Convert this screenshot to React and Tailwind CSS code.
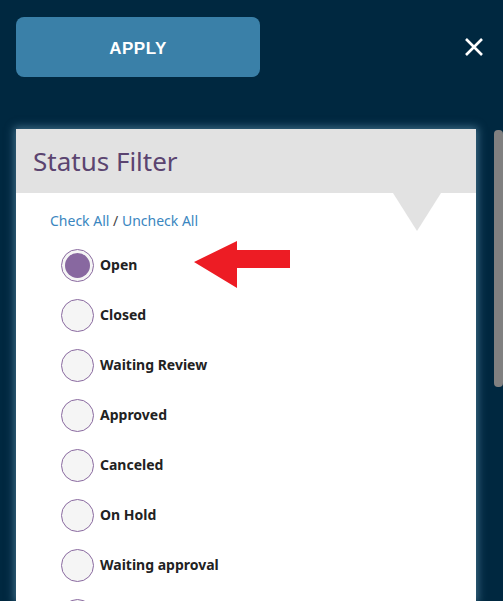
const STATUSES = [
  { label: 'Open', checked: true },
  { label: 'Closed' },
  { label: 'Waiting Review' },
  { label: 'Approved' },
  { label: 'Canceled' },
  { label: 'On Hold' },
  { label: 'Waiting approval' },
  { label: 'Rejected' },
];

const Radio = ({ checked }) => (
  <span className="w-[33px] h-[33px] shrink-0 rounded-full border-[1.5px] border-[#8a6aa0] bg-[#f5f5f5] flex items-center justify-center">
    {checked && <span className="w-[25px] h-[25px] rounded-full bg-[#8868a0]" />}
  </span>
);

const StatusRow = ({ status }) => (
  <div className="h-[50px] flex items-center pl-[45px]">
    <Radio checked={status.checked} />
    <span className="ml-[6px] text-[14px] font-bold text-[#222] leading-none">{status.label}</span>
  </div>
);

export default function App() {
  return (
    <div
      className="w-[503px] h-[601px] overflow-hidden bg-[#002840] flex flex-col"
      style={{ fontFamily: '"Noto Sans", "Open Sans", sans-serif' }}
    >
      <div className="h-[129px] shrink-0 flex items-start pt-[17px] pl-4 pr-[20px]">
        <button
          className="w-[244px] h-[60px] pt-[4px] rounded-[8px] bg-[#3a80a8] text-white font-bold text-[17px] tracking-[0.5px]"
          style={{ fontFamily: '"Liberation Sans", Arial, sans-serif' }}
        >
          APPLY
        </button>
        <svg className="ml-auto mt-[21px] w-[18px] h-[18px]" viewBox="0 0 18 18" stroke="white" strokeWidth={2.6}>
          <path d="M1 1L17 17M17 1L1 17" />
        </svg>
      </div>

      <div className="flex flex-1 min-h-0">
        <div className="relative ml-4 w-[460px] bg-white shadow-[0_0_8px_2px_rgba(110,160,190,0.55)]">
          <div className="h-16 bg-[#e2e2e2] flex items-center pl-[17px]">
            <h2 className="text-[26px] text-[#5b4470] leading-none">Status Filter</h2>
          </div>
          <svg className="absolute left-[377px] top-16 w-[48px] h-[38px]" viewBox="0 0 48 38">
            <polygon points="0,0 48,0 24,38" fill="#e2e2e2" />
          </svg>

          <div className="pt-[18px] pl-[34px] text-[14px] leading-5 text-[#3a86c0]">
            Check All <span className="text-[#444]">/</span> Uncheck All
          </div>

          <div className="mt-[9px] flex flex-col">
            {STATUSES.map((s) => (
              <StatusRow key={s.label} status={s} />
            ))}
          </div>

          <svg className="absolute left-[178px] top-[112px] w-[97px] h-[48px]" viewBox="0 0 97 48">
            <polygon points="0,21 43,0 43,9 96,9 96,27 43,27 43,47" fill="#ed1c24" />
          </svg>
        </div>

        <div className="ml-auto w-[9px] pt-px">
          <div className="h-[257px] rounded-[4px] bg-[#808080]" />
        </div>
      </div>
    </div>
  );
}
